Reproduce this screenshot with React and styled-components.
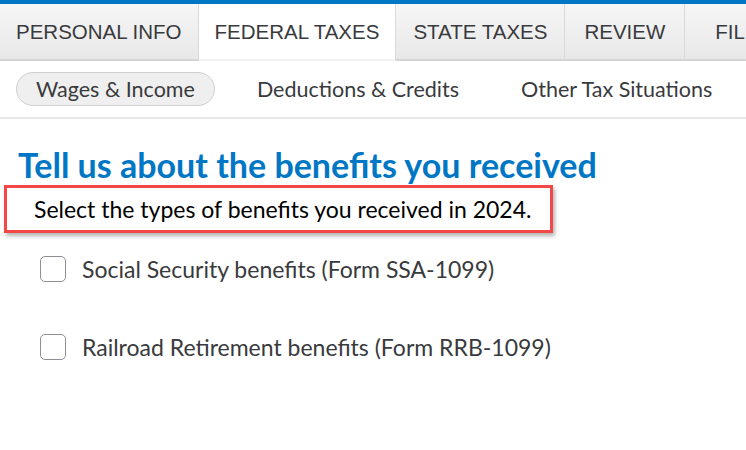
import React from "react";
import styled, { createGlobalStyle } from "styled-components";

const Global = createGlobalStyle`
  html, body { margin: 0; padding: 0; background: #fff; }
  body { font-family: Lato, "Noto Sans", sans-serif; color: #393a3d; }
`;

const Page = styled.div`
  width: 746px;
  height: 450px;
  overflow: hidden;
  display: flex;
  flex-direction: column;
`;

const TopBar = styled.div`
  height: 4px;
  background: #0077c5;
  flex-shrink: 0;
`;

const Tabs = styled.nav`
  display: flex;
  height: 57px;
  flex-shrink: 0;
  white-space: nowrap;
`;

const Tab = styled.div`
  display: flex;
  align-items: center;
  justify-content: center;
  padding: 0 ${(p) => p.$pad || 16}px;
  font-family: "Liberation Sans", Arial, sans-serif;
  font-size: 20.5px;
  color: #393a3d;
  flex-shrink: 0;
  box-sizing: border-box;
  border-right: 1px solid #d9d9d9;
  background: ${(p) => (p.$active ? "#fff" : "linear-gradient(#f6f6f6, #e8e8e8)")};
  border-bottom: 2px solid ${(p) => (p.$active ? "#f2f2f2" : "#d4d4d4")};
`;

const SubNav = styled.div`
  display: flex;
  align-items: center;
  gap: 22px;
  height: 56px;
  padding: 0 16px;
  border-bottom: 2px solid #e6e6e6;
  flex-shrink: 0;
  white-space: nowrap;
`;

const SubItem = styled.div`
  height: 34px;
  box-sizing: border-box;
  display: flex;
  align-items: center;
  flex-shrink: 0;
  padding: 0 19px;
  border-radius: 17px;
  font-size: 21.5px;
  color: #393a3d;
  border: 1px solid ${(p) => (p.$active ? "#cfcfcf" : "transparent")};
  background: ${(p) => (p.$active ? "#efefef" : "transparent")};
`;

const Content = styled.main`
  display: flex;
  flex-direction: column;
  padding: 28px 0 0 4px;
`;

const Heading = styled.h1`
  margin: 0 0 0 14px;
  font-size: 34px;
  line-height: 36px;
  font-weight: 700;
  color: #0077c5;
`;

const Highlight = styled.div`
  align-self: flex-start;
  width: 549px;
  height: 48px;
  box-sizing: border-box;
  margin-top: 2px;
  border: 3px solid #f44848;
  box-shadow: 2px 3px 4px rgba(0, 0, 0, 0.3);
  display: flex;
  align-items: center;
  padding-left: 27px;
  font-size: 23px;
  color: #000;
`;

const Options = styled.div`
  display: flex;
  flex-direction: column;
  gap: 50px;
  padding: 22px 0 0 36px;
`;

const Option = styled.label`
  display: flex;
  align-items: center;
  gap: 16px;
  font-size: 23px;
  line-height: 28px;
  color: #393a3d;
`;

const Box = styled.span`
  width: 26px;
  height: 26px;
  box-sizing: border-box;
  border: 1.5px solid #8d9096;
  border-radius: 5px;
  background: #fff;
  flex-shrink: 0;
`;

export default function App() {
  return (
    <Page>
      <Global />
      <TopBar />
      <Tabs>
        <Tab>PERSONAL INFO</Tab>
        <Tab $active>FEDERAL TAXES</Tab>
        <Tab $pad={17}>STATE TAXES</Tab>
        <Tab $pad={19}>REVIEW</Tab>
        <Tab $pad={30}>FILE</Tab>
      </Tabs>
      <SubNav>
        <SubItem $active>Wages &amp; Income</SubItem>
        <SubItem>Deductions &amp; Credits</SubItem>
        <SubItem>Other Tax Situations</SubItem>
      </SubNav>
      <Content>
        <Heading>Tell us about the benefits you received</Heading>
        <Highlight>Select the types of benefits you received in 2024.</Highlight>
        <Options>
          <Option>
            <Box />
            Social Security benefits (Form SSA-1099)
          </Option>
          <Option>
            <Box />
            Railroad Retirement benefits (Form RRB-1099)
          </Option>
        </Options>
      </Content>
    </Page>
  );
}
